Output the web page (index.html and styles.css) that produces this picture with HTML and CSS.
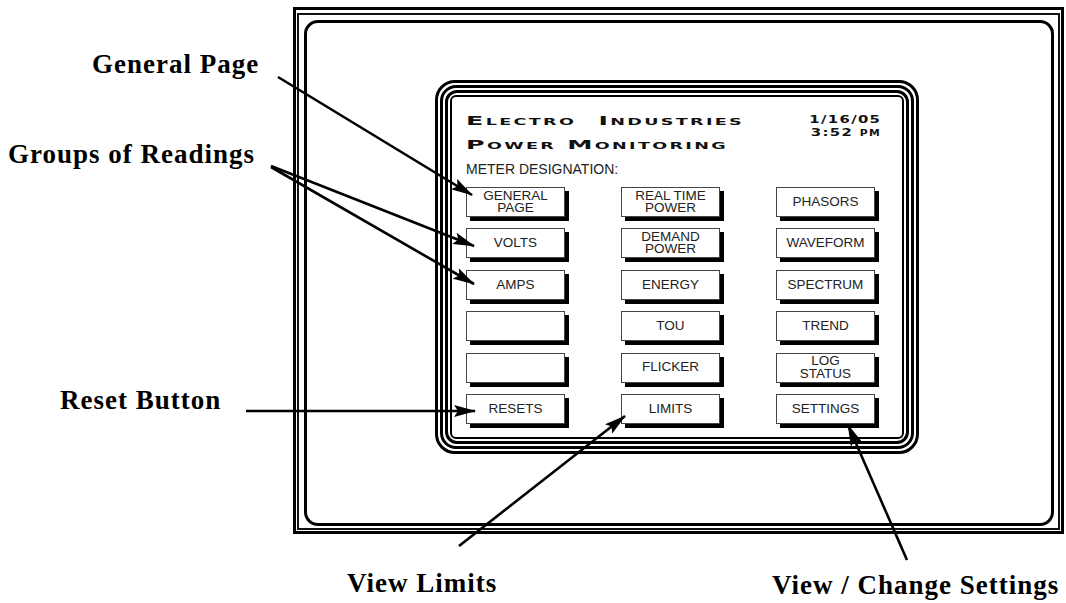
FILE: index.html
```html
<!DOCTYPE html>
<html lang="en">

<head>
    <meta charset="UTF-8">
    <meta name="viewport" content="width=device-width, initial-scale=1.0">
    <title>Power Monitoring - Main Screen</title>

    <link rel="stylesheet" href="styles.css">
</head>

<body>
    <div class="figure">

        <!-- Meter housing -->
        <div class="housing">
            <div class="housing-rim">
                <div class="housing-face">

                    <!-- Display bezel -->
                    <div class="bezel">
                        <div class="bezel-ring">
                            <div class="bezel-ring bezel-ring-inner">
                                <div class="screen">
                                    <div class="screen-head">
                                        <div class="brand">
                                            <div class="brand-line">Electro&nbsp; Industries</div>
                                            <div class="brand-line">Power Monitoring</div>
                                        </div>
                                        <div class="clock">
                                            <div class="clock-line">1/16/05</div>
                                            <div class="clock-line">3:52 pm</div>
                                        </div>
                                    </div>

                                    <p class="designation">METER DESIGNATION:</p>

                                    <div class="menu">
                                        <button class="key">GENERAL<br>PAGE</button>
                                        <button class="key">REAL TIME<br>POWER</button>
                                        <button class="key">PHASORS</button>

                                        <button class="key">VOLTS</button>
                                        <button class="key">DEMAND<br>POWER</button>
                                        <button class="key">WAVEFORM</button>

                                        <button class="key">AMPS</button>
                                        <button class="key">ENERGY</button>
                                        <button class="key">SPECTRUM</button>

                                        <button class="key"></button>
                                        <button class="key">TOU</button>
                                        <button class="key">TREND</button>

                                        <button class="key"></button>
                                        <button class="key">FLICKER</button>
                                        <button class="key">LOG<br>STATUS</button>

                                        <button class="key">RESETS</button>
                                        <button class="key">LIMITS</button>
                                        <button class="key">SETTINGS</button>
                                    </div>
                                </div>
                            </div>
                        </div>
                    </div>

                </div>
            </div>
        </div>

        <!-- Callouts -->
        <span class="callout callout-general">General Page</span>
        <span class="callout callout-groups">Groups of Readings</span>
        <span class="callout callout-reset">Reset Button</span>
        <span class="callout callout-limits">View Limits</span>
        <span class="callout callout-settings">View / Change Settings</span>

        <svg class="arrows" width="1066" height="603" viewBox="0 0 1066 603">
            <defs>
                <marker id="head" markerWidth="22" markerHeight="12" refX="21" refY="6" orient="auto"
                    markerUnits="userSpaceOnUse">
                    <path d="M0 0 L22 6 L0 12 L4 6 Z" fill="#000" />
                </marker>
            </defs>
            <line x1="278" y1="77" x2="472" y2="195" marker-end="url(#head)" />
            <line x1="271" y1="166" x2="474" y2="246" marker-end="url(#head)" />
            <line x1="271" y1="167" x2="474" y2="284" marker-end="url(#head)" />
            <line x1="246" y1="411" x2="475" y2="411" marker-end="url(#head)" />
            <line x1="459" y1="546" x2="625" y2="416" marker-end="url(#head)" />
            <line x1="907" y1="560" x2="848" y2="425" marker-end="url(#head)" />
        </svg>
    </div>
</body>

</html>
```

FILE: styles.css
```css
body {
    margin: 0;
    background: #fff;
    font-family: "Liberation Sans", Arial, sans-serif;
}

.figure {
    position: relative;
    width: 1066px;
    height: 603px;
    overflow: hidden;
}

/* meter housing: two square outlines and a rounded face */

.housing {
    box-sizing: border-box;
    width: 771px;
    height: 527px;
    margin: 7px 0 0 293px;
    padding: 3px 1px 1px 1px;
    border: 3px solid #000;
    display: flex;
}

.housing-rim {
    flex: 1;
    display: flex;
    border: 2px solid #111;
    padding: 5px 4px 2px 5px;
}

.housing-face {
    flex: 1;
    border: 3px solid #000;
    border-radius: 14px;
    padding: 57px 0 0 128px;
}

/* display bezel */

.bezel {
    box-sizing: border-box;
    width: 484px;
    height: 374px;
    display: flex;
    border: 3px solid #000;
    border-radius: 20px;
    padding: 2px;
}

.bezel-ring {
    flex: 1;
    display: flex;
    border: 3px solid #000;
    border-radius: 16px;
    padding: 2px;
}

.bezel-ring-inner {
    border-radius: 12px;
}

.screen {
    flex: 1;
    border: 2px solid #000;
    border-radius: 6px;
    padding: 12px 14px 0 14px;
}

.screen-head {
    display: flex;
    justify-content: space-between;
}

.brand {
    display: flex;
    flex-direction: column;
    align-items: flex-start;
}

.brand-line {
    font-family: "DejaVu Sans", sans-serif;
    font-weight: bold;
    font-size: 13px;
    line-height: 24px;
    font-variant: small-caps;
    letter-spacing: 1.2px;
    white-space: nowrap;
    color: #111;
    transform: scaleX(1.95);
    transform-origin: left center;
}

.clock {
    display: flex;
    flex-direction: column;
    align-items: flex-end;
    margin-top: 4px;
    margin-right: 7px;
}

.clock-line {
    font-family: "DejaVu Sans", sans-serif;
    font-weight: bold;
    font-size: 11px;
    line-height: 13px;
    font-variant: small-caps;
    letter-spacing: 1px;
    white-space: nowrap;
    color: #111;
    transform: scaleX(1.35);
    transform-origin: right center;
}

.designation {
    margin: 0 0 6px;
    font-size: 14px;
    line-height: 24px;
    color: #222;
}

/* menu keys */

.menu {
    display: grid;
    grid-template-columns: repeat(3, 99px);
    grid-auto-rows: 30px;
    column-gap: 56px;
    row-gap: 11.4px;
}

.key {
    box-sizing: border-box;
    padding: 0;
    border: 1px solid #444;
    background: #fff;
    box-shadow: 4px 4px 0 #000;
    font-family: "Liberation Sans", Arial, sans-serif;
    font-size: 13.5px;
    line-height: 12.5px;
    color: #222;
    text-align: center;
}

/* callouts */

.callout {
    position: absolute;
    font-family: "Liberation Serif", "Times New Roman", serif;
    font-weight: bold;
    font-size: 27px;
    line-height: 27px;
    letter-spacing: 1px;
    white-space: nowrap;
    color: #000;
}

.callout-general {
    left: 92px;
    top: 51px;
}

.callout-groups {
    left: 8px;
    top: 141px;
}

.callout-reset {
    left: 60px;
    top: 387px;
}

.callout-limits {
    left: 347px;
    top: 570px;
}

.callout-settings {
    left: 772px;
    top: 572px;
}

.arrows {
    position: absolute;
    left: 0;
    top: 0;
    pointer-events: none;
}

.arrows line {
    stroke: #000;
    stroke-width: 2.6;
}
```
